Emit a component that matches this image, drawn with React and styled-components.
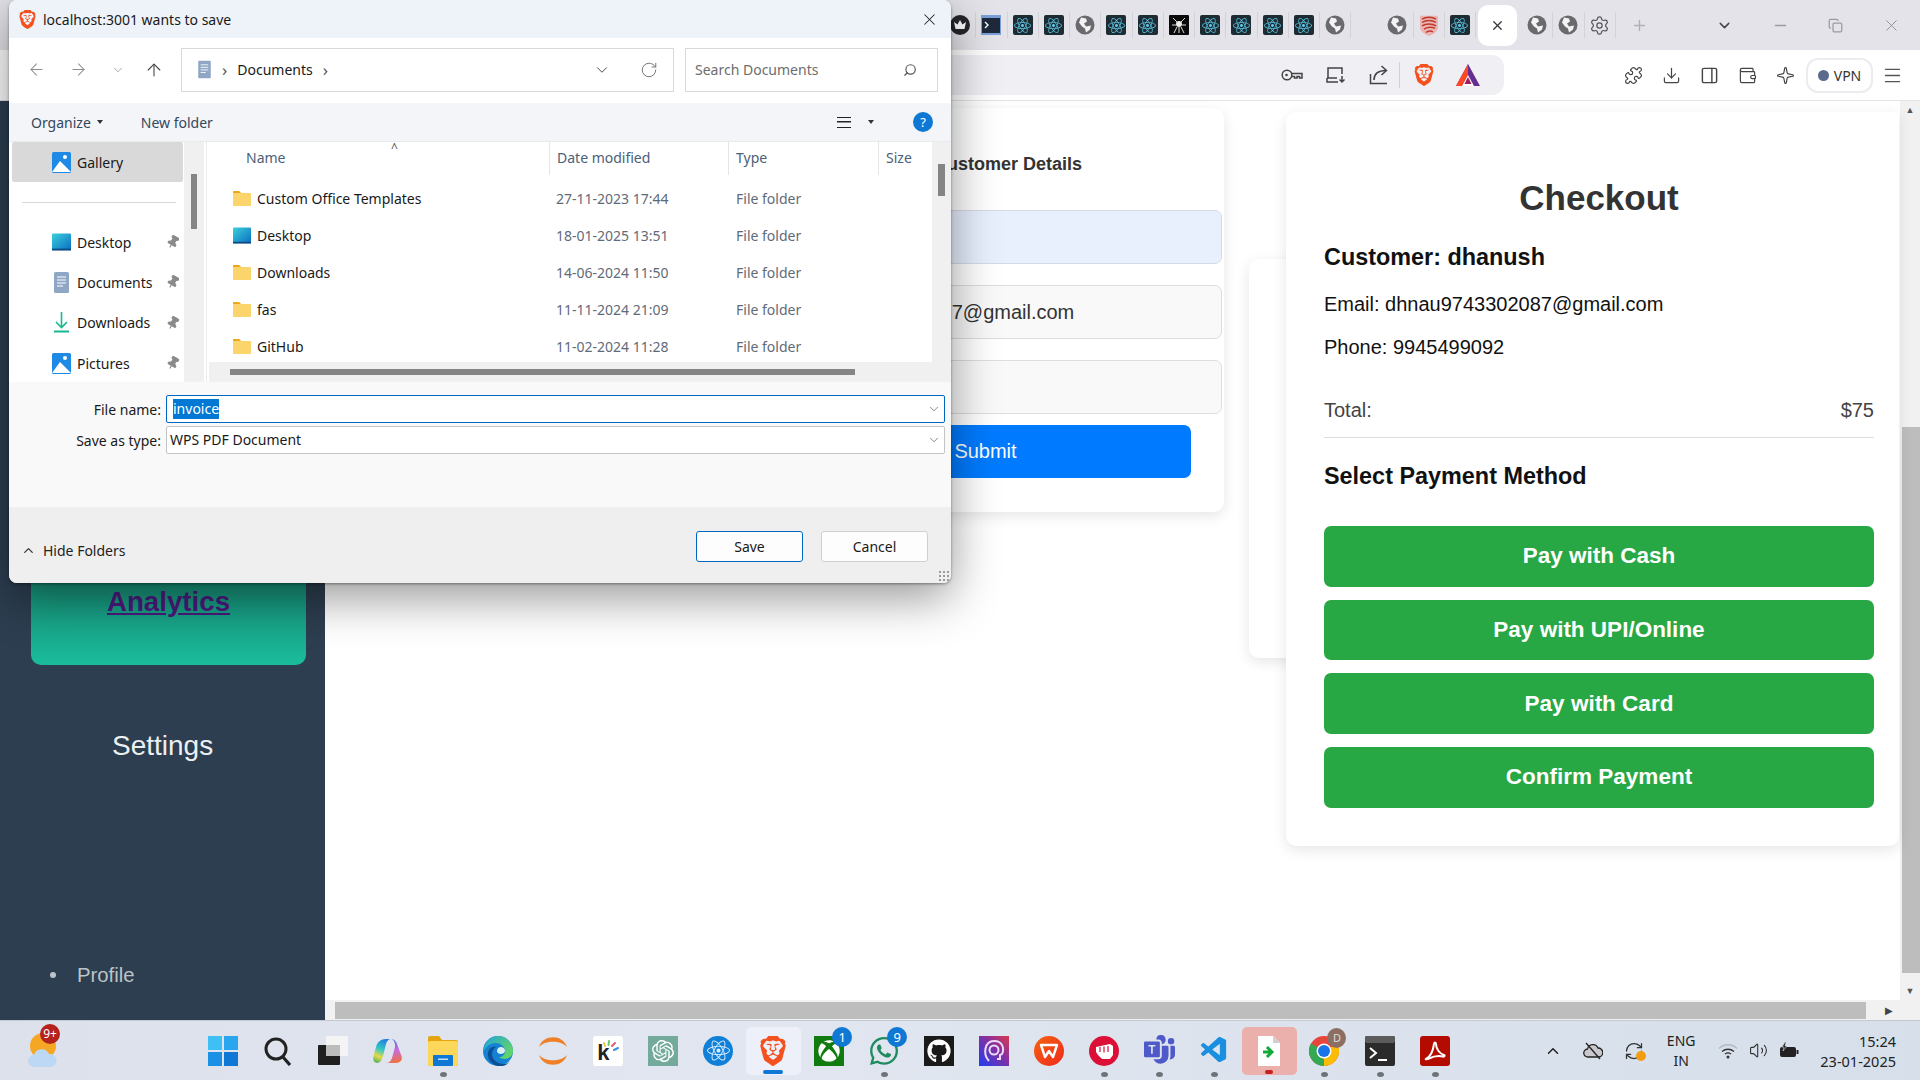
import styled, { createGlobalStyle } from 'styled-components';
import {
  ArrowLeft,
  ArrowRight,
  ArrowUp,
  ChevronDown,
  ChevronUp,
  Copy,
  Download,
  Menu,
  Minus,
  PanelRight,
  Pin,
  Plus,
  Puzzle,
  RotateCw,
  Search,
  Settings as Gear,
  Sparkle,
  Volume2,
  Wallet,
  X,
  RefreshCw,
} from 'lucide-react';
import { FaReact, FaGithub, FaXbox, FaWhatsapp } from 'react-icons/fa';
import { SiBrave, SiOpenai } from 'react-icons/si';
import { BsMicrosoftTeams } from 'react-icons/bs';
import { VscVscode } from 'react-icons/vsc';

const UI_FONT = `'Noto Sans', 'Open Sans', sans-serif`;
const PAGE_FONT = `'Liberation Sans', Arial, sans-serif`;

const GlobalStyle = createGlobalStyle`
  html, body {
    margin: 0;
    padding: 0;
    width: 1920px;
    height: 1080px;
    overflow: hidden;
    background: #fff;
  }
  * { box-sizing: border-box; }
`;

const BraveMark = ({ size = 22 }) => <SiBrave size={size} color="#f4511e" />;

const ReactTile = () => (
  <TabTile $bg="#1d2b33">
    <FaReact size={17} color="#5cc8e6" />
  </TabTile>
);

const GlobeIcon = () => (
  <svg width="20" height="20" viewBox="0 0 20 20">
    <circle cx="10" cy="10" r="9.5" fill="#6a6a6e" />
    <path d="M6 2.5l5 1 1 3-3 2 2 3 5-1-1 4-4 3-1-4-3-2-3-4z" fill="#f3f3f5" />
  </svg>
);

const CrownIcon = () => (
  <svg width="20" height="20" viewBox="0 0 20 20">
    <circle cx="10" cy="10" r="10" fill="#26262b" />
    <path d="M4 7l3.5 2.5L10 5l2.5 4.5L16 7l-1.5 7h-9z" fill="#fff" />
  </svg>
);

const TerminalTabIcon = () => (
  <svg width="20" height="20" viewBox="0 0 20 20">
    <rect width="20" height="20" fill="#7a9fd8" />
    <rect x="1" y="3" width="18" height="15" fill="#1e2a3c" />
    <path d="M4 7l3 3-3 3" stroke="#fff" strokeWidth="1.4" fill="none" />
  </svg>
);

const SpiderIcon = () => (
  <svg width="20" height="20" viewBox="0 0 20 20">
    <rect width="20" height="20" rx="1" fill="#0a0a0a" />
    <circle cx="10" cy="9" r="3" fill="#eee" />
    <path d="M4 3l4 4M16 3l-4 4M3 10h4M17 10h-4M5 18l3-6M15 18l-3-6M10 12v6" stroke="#ddd" strokeWidth="1" />
  </svg>
);

const FingerprintShield = () => (
  <svg width="20" height="22" viewBox="0 0 20 26" preserveAspectRatio="none">
    <path d="M1 2h18v14c0 5-5 8-9 10-4-2-9-5-9-10z" fill="#e9b6b3" />
    <path
      d="M3 6c4-3 10-3 14 0M3 10c4-3 10-3 14 0M3 14c4-3 10-3 14 0M5 18c3-3 8-3 11-1M7 22c2-2 5-2 7-1"
      stroke="#c0392b"
      strokeWidth="1.7"
      fill="none"
    />
  </svg>
);

const BatTriangle = () => (
  <svg width="24" height="22" viewBox="0 0 24 22">
    <path d="M12 0l12 22H0z" fill="#662d91" />
    <path d="M12 0L0 22h6l6-11z" fill="#ff4724" />
    <path d="M12 11l-6 11h12z" fill="#fff" />
    <path d="M12 13l-3.6 7h7.2z" fill="#9e1f63" />
  </svg>
);

const KeyIcon = () => (
  <svg width="22" height="14" viewBox="0 0 22 14" fill="none" stroke="#444" strokeWidth="1.5">
    <circle cx="6" cy="7" r="4.800" />
    <circle cx="5.500" cy="7" r="1.300" fill="#444" stroke="none" />
    <path d="M10.500 5.500H21V10h-2.500V8.500H16V10h-2.500V8.500h-3" />
  </svg>
);

const InstallIcon = () => (
  <svg width="20" height="18" viewBox="0 0 20 18" fill="none" stroke="#444" strokeWidth="1.5">
    <path d="M2 12V2h14v6" />
    <path d="M1 12v4h11M1 12h10" />
    <path d="M16 10v6M13.500 13.500l2.500 2.500 2.500-2.500" />
  </svg>
);

const ShareOutIcon = () => (
  <svg width="20" height="20" viewBox="0 0 20 20" fill="none" stroke="#444" strokeWidth="1.5">
    <path d="M1.500 9v9.500H18" />
    <path d="M5 15c0-6 4-9.500 12-9.500" />
    <path d="M12.500 1l5 4.500-5 4.500" />
  </svg>
);

const FolderIcon = () => (
  <svg width="18" height="15" viewBox="0 0 18 15">
    <path d="M0 1a1 1 0 0 1 1-1h5l2 2h9a1 1 0 0 1 1 1v11a1 1 0 0 1-1 1H1a1 1 0 0 1-1-1z" fill="#fbd56b" />
    <path d="M0 1a1 1 0 0 1 1-1h5l2 2H0z" fill="#e9a91b" />
  </svg>
);

const DesktopFolder = ({ w = 20, h = 20 }) => (
  <svg width={w} height={h} viewBox="0 0 20 20">
    <defs>
      <linearGradient id="deskg" x1="0" y1="0" x2="1" y2="1">
        <stop offset="0" stopColor="#3bd0dc" />
        <stop offset="1" stopColor="#0a6fc2" />
      </linearGradient>
    </defs>
    <rect y="1" width="20" height="17" rx="1" fill="url(#deskg)" />
    <rect y="17" width="20" height="2" fill="#0b4a86" />
  </svg>
);

const DocIcon = () => (
  <svg width="15" height="21" viewBox="0 0 15 21">
    <rect width="15" height="21" rx="1.5" fill="#8fa7c4" />
    <path d="M3 5h9M3 8h9M3 11h9M3 14h6" stroke="#fff" strokeWidth="1" />
  </svg>
);

const GalleryIcon = () => (
  <svg width="19" height="21" viewBox="0 0 19 21">
    <rect width="19" height="21" rx="1.5" fill="#1f8ae6" />
    <circle cx="13" cy="5" r="2" fill="#fff" />
    <path d="M0 20l8-11 11 11z" fill="#fff" />
  </svg>
);

const DownloadArrow = () => (
  <svg width="15" height="21" viewBox="0 0 15 21">
    <path d="M7.5 0v15M2 10l5.500 5.500L13 10" stroke="#17b890" strokeWidth="1.6" fill="none" />
    <path d="M0 19.500h15" stroke="#17b890" strokeWidth="2" />
  </svg>
);

const tabIcons = {
  react: ReactTile,
  globe: GlobeIcon,
  crown: CrownIcon,
  term: TerminalTabIcon,
  spider: SpiderIcon,
  print: FingerprintShield,
  gear: () => <Gear size={21} color="#55555c" strokeWidth={1.4} />,
};

const leftTabs = ['crown', 'term', 'react', 'react', 'globe', 'react', 'react', 'spider', 'react', 'react', 'react', 'react', 'globe'];
const midTabs = ['globe', 'print', 'react'];
const rightTabs = ['globe', 'globe', 'gear'];

const renderTabs = list =>
  list.map((name, i) => {
    const Icon = tabIcons[name];
    return (
      <Tab key={i}>
        <Icon />
      </Tab>
    );
  });

const files = [
  { name: 'Custom Office Templates', date: '27-11-2023 17:44' },
  { name: 'Desktop', date: '18-01-2025 13:51', desk: true },
  { name: 'Downloads', date: '14-06-2024 11:50' },
  { name: 'fas', date: '11-11-2024 21:09' },
  { name: 'GitHub', date: '11-02-2024 11:28' },
];

const navPlaces = [
  { name: 'Desktop', icon: <DesktopFolder /> },
  { name: 'Documents', icon: <DocIcon /> },
  { name: 'Downloads', icon: <DownloadArrow /> },
  { name: 'Pictures', icon: <GalleryIcon /> },
];

const payments = ['Pay with Cash', 'Pay with UPI/Online', 'Pay with Card', 'Confirm Payment'];

const getTaskIcons = () => [
  { key: 'win', icon: (
    <svg width="30" height="30" viewBox="0 0 30 30">
      <rect width="14" height="14" fill="#3fc0f5" />
      <rect x="16" width="14" height="14" fill="#2aa6ee" />
      <rect y="16" width="14" height="14" fill="#1b91e6" />
      <rect x="16" y="16" width="14" height="14" fill="#0f78d4" />
    </svg>
  ) },
  { key: 'search', icon: (
    <svg width="30" height="30" viewBox="0 0 30 30">
      <circle cx="13" cy="13" r="10" fill="none" stroke="#222" strokeWidth="3" />
      <path d="M20 21l7 8" stroke="#222" strokeWidth="3.2" />
    </svg>
  ) },
  { key: 'view', icon: (
    <svg width="30" height="30" viewBox="0 0 30 30">
      <rect x="0" y="9" width="22" height="20" rx="1" fill="#1f1f1f" />
      <rect x="8" y="0" width="22" height="20" rx="1" fill="#f4f4f4" />
      <rect x="8" y="9" width="14" height="11" fill="#bcbcbc" />
    </svg>
  ) },
  { key: 'copilot', icon: (
    <svg width="30" height="26" viewBox="0 0 30 26">
      <defs>
        <linearGradient id="copa" x1="0.6" y1="0" x2="0.3" y2="1">
          <stop offset="0" stopColor="#1f7ee0" />
          <stop offset=".45" stopColor="#35c9c0" />
          <stop offset=".75" stopColor="#e8d84a" />
          <stop offset="1" stopColor="#58b85a" />
        </linearGradient>
        <linearGradient id="copb" x1="0.4" y1="0" x2="0.6" y2="1">
          <stop offset="0" stopColor="#3b6fe8" />
          <stop offset=".5" stopColor="#c86be0" />
          <stop offset="1" stopColor="#f2703c" />
        </linearGradient>
      </defs>
      <path d="M13 1h5c-3 0-4 2-5 5l-3 12c-.8 4-3 7-6 7-3 0-4.500-3-3.500-7l2.500-9c1-5 5-8 10-8z" fill="url(#copa)" />
      <path d="M18 1c3 0 5 2 6 5l4.500 12c1.500 4-1.500 7-5.500 7h-10c3 0 5-2 6-5l3-11c.7-3-1-8-4-8z" fill="url(#copb)" />
    </svg>
  ) },
  { key: 'files', icon: (
    <svg width="30" height="30" viewBox="0 0 30 30">
      <path d="M0 2a2 2 0 0 1 2-2h9l3 4h14a2 2 0 0 1 2 2v22a2 2 0 0 1-2 2H2a2 2 0 0 1-2-2z" fill="#e5a50f" />
      <rect y="5" width="30" height="25" rx="2" fill="#fcd759" />
      <rect x="5" y="19" width="20" height="11" rx="1" fill="#0f78d4" />
      <rect x="10" y="22.500" width="10" height="1.500" fill="#bfe0f7" />
    </svg>
  ), dot: true },
  { key: 'edge', icon: (
    <svg width="30" height="30" viewBox="0 0 30 30">
      <defs>
        <linearGradient id="edgea" x1="0" y1="0" x2="1" y2="0.6">
          <stop offset="0" stopColor="#1fa5dc" />
          <stop offset="1" stopColor="#62d36a" />
        </linearGradient>
      </defs>
      <circle cx="15" cy="15" r="15" fill="#1481d2" />
      <path d="M15 0a15 15 0 0 1 15 15c0 5-4 8-8 8-3 0-5-1-6-2 3 0 6-2 6-6 0-5-5-8-9-8-6 0-11 4-13 10C1 7 7 0 15 0z" fill="url(#edgea)" />
      <path d="M9 18c0 6 6 10 12 10 2 0 4-.5 6-3-3 5-8 5.500-12 5C9 29 4 23 5 17c.6-4 4-7 8-6-2 1-4 4-4 7z" fill="#0c4f96" />
      <path d="M14 15c0-2 1.500-4 4-4 2.500 0 4 2 4 4 0 2-2.500 3-4 3-2 0-4-1-4-3z" fill="#d8ecf2" />
    </svg>
  ) },
  { key: 'arc', icon: (
    <svg width="30" height="30" viewBox="0 0 30 30">
      <path d="M1 11C5-2 25-2 29 11 23 4 7 4 1 11z" fill="#f08028" />
      <path d="M1 19c4 13 24 13 28 0-6 7-22 7-28 0z" fill="#f08028" />
    </svg>
  ) },
  { key: 'kite', icon: (
    <KiteTile>
      <KiteLetter>k</KiteLetter>
      <KiteTicks width="30" height="30" viewBox="0 0 30 30" strokeWidth="2" strokeLinecap="round">
        <path d="M11 7l1 3" stroke="#f2c230" />
        <path d="M16 5l-.5 4" stroke="#6ac46a" />
        <path d="M22 7l-3 3" stroke="#e0567a" />
        <path d="M25 12l-4 2" stroke="#3f8fe0" />
      </KiteTicks>
    </KiteTile>
  ) },
  { key: 'gpt', icon: (
    <GptTile>
      <SiOpenai size={22} color="#fff" />
    </GptTile>
  ) },
  { key: 'atom', icon: (
    <AtomCircle>
      <FaReact size={23} color="#d6ecff" />
    </AtomCircle>
  ) },
  { key: 'brave', icon: <BraveMark size={30} />, active: 'blue' },
  { key: 'xbox', icon: (
    <XboxTile>
      <FaXbox size={22} color="#fff" />
    </XboxTile>
  ), badge: '1' },
  { key: 'wa', icon: <FaWhatsapp size={32} color="#1f8b5f" />, badge: '9', dot: true },
  { key: 'gh', icon: (
    <GithubTile>
      <FaGithub size={24} color="#fff" />
    </GithubTile>
  ) },
  { key: 'wr', icon: (
    <WarpTile>
      <svg width="22" height="24" viewBox="0 0 22 24" fill="none" stroke="#eadcf8" strokeWidth="2">
        <path d="M6 22c-6-6-5-20 5-20s10 9 8 13l-2 1v4h-3" />
        <circle cx="11" cy="11" r="4.500" />
      </svg>
    </WarpTile>
  ) },
  { key: 'wps', icon: (
    <svg width="30" height="30" viewBox="0 0 30 30">
      <defs>
        <linearGradient id="wpsg" x1="0" y1="0" x2="1" y2="1">
          <stop offset="0" stopColor="#f5620f" />
          <stop offset="1" stopColor="#ee2a1e" />
        </linearGradient>
      </defs>
      <circle cx="15" cy="15" r="15" fill="url(#wpsg)" />
      <path d="M7 9h16l-4 12-4-6-4 6z" fill="none" stroke="#fff" strokeWidth="2.400" strokeLinejoin="round" />
    </svg>
  ) },
  { key: 'red', icon: (
    <svg width="30" height="30" viewBox="0 0 30 30">
      <circle cx="15" cy="15" r="15" fill="#dc0f36" />
      <path d="M7 11l14-3 3 2v9l-3 4h-8l-4-4-2-3z" fill="#fff" />
      <path d="M11 11v5M15 10.500v6M19 10v6" stroke="#dc0f36" strokeWidth="1.200" />
    </svg>
  ), dot: true },
  { key: 'teams', icon: <BsMicrosoftTeams size={31} color="#5059c9" />, dot: true },
  { key: 'code', icon: <VscVscode size={31} color="#1a8fe0" />, dot: true },
  { key: 'file', icon: (
    <svg width="22" height="30" viewBox="0 0 22 30">
      <path d="M0 0h15l7 7v23H0z" fill="#fff" />
      <path d="M15 0l7 7h-7z" fill="#cfcfcf" />
      <path d="M5 16h8M9 11l5 5-5 5" stroke="#12a83a" strokeWidth="3" fill="none" />
    </svg>
  ), active: 'red' },
  { key: 'chrome', icon: (
    <ChromeWrap>
      <svg width="30" height="30" viewBox="0 0 30 30">
        <circle cx="15" cy="15" r="15" fill="#e8453c" />
        <path d="M15 15L2 7.500A15 15 0 0 0 15 30z" fill="#34a853" />
        <path d="M15 15v15A15 15 0 0 0 28 7.500z" fill="#fbbc05" />
        <circle cx="15" cy="15" r="7.500" fill="#fff" />
        <circle cx="15" cy="15" r="6" fill="#1a73e8" />
      </svg>
      <ChromeBadge>D</ChromeBadge>
    </ChromeWrap>
  ), dot: true },
  { key: 'term', icon: (
    <svg width="30" height="30" viewBox="0 0 30 30">
      <rect width="30" height="30" rx="2" fill="#2b2b2b" />
      <rect width="30" height="7" rx="2" fill="#5c5c5c" />
      <path d="M5 12l6 5-6 5" stroke="#fff" strokeWidth="2" fill="none" />
      <path d="M13 24h9" stroke="#fff" strokeWidth="2" />
    </svg>
  ), dot: true },
  { key: 'pdf', icon: (
    <PdfTile>
      <svg width="22" height="22" viewBox="0 0 22 22">
        <path
          d="M2 19c4-2 7-8 8-15 .3-2 2-2 2 0 0 5 4 10 8 11 1 .5 .5 2-1 1.500-5-1-10 0-14 2-2 1-4 1-3 .5z"
          fill="none"
          stroke="#fff"
          strokeWidth="2"
        />
      </svg>
    </PdfTile>
  ), dot: true },
];

const App = () => {
  return (
    <>
      <GlobalStyle />
      <Screen>
        <TabStrip>
          {renderTabs(leftTabs)}
          <TabGap />
          {renderTabs(midTabs)}
          <ActiveTab>
            <X size={15} color="#333" />
          </ActiveTab>
          {renderTabs(rightTabs)}
          <NewTab>
            <Plus size={17} color="#b0b0b6" />
          </NewTab>
          <WindowControls>
            <ChevronDown size={17} color="#444" />
            <Minus size={17} color="#9a9aa0" />
            <Copy size={15} color="#9a9aa0" />
            <X size={19} color="#8d8d92" strokeWidth={1.2} />
          </WindowControls>
        </TabStrip>

        <Toolbar>
          <AddressBar>
            <AddressActions>
              <KeyIcon />
              <InstallIcon />
              <ShareOutIcon />
            </AddressActions>
            <BarDivider />
            <BraveMark size={22} />
            <BatSlot>
              <BatTriangle />
            </BatSlot>
          </AddressBar>
          <ToolIcons>
            <Puzzle size={19} color="#444" strokeWidth={1.5} />
            <Download size={19} color="#444" strokeWidth={1.5} />
            <PanelRight size={19} color="#444" strokeWidth={1.8} />
            <Wallet size={19} color="#444" strokeWidth={1.5} />
            <Sparkle size={19} color="#444" strokeWidth={1.5} />
          </ToolIcons>
          <VpnPill>
            <VpnDot />
            VPN
          </VpnPill>
          <MenuButton>
            <Menu size={21} color="#555" strokeWidth={1.6} />
          </MenuButton>
        </Toolbar>

        <PageBody>
          <Sidebar>
            <AnalyticsCard>
              <AnalyticsLink href="#analytics">Analytics</AnalyticsLink>
            </AnalyticsCard>
            <SettingsLabel>Settings</SettingsLabel>
            <ProfileList>
              <ProfileItem>Profile</ProfileItem>
            </ProfileList>
          </Sidebar>

          <MainColumn>
            <ViewportRow>
              <Content>
                <DetailsCard>
                  <DetailsTitle>Customer Details</DetailsTitle>
                  <DetailsInput $filled readOnly value="dhanush" />
                  <DetailsInput readOnly value="dhnau9743302087@gmail.com" />
                  <DetailsInput readOnly value="9945499092" />
                  <SubmitButton>Submit</SubmitButton>
                </DetailsCard>
                <BackCard />
                <CheckoutCard>
                  <CheckoutTitle>Checkout</CheckoutTitle>
                  <CustomerName>Customer: dhanush</CustomerName>
                  <InfoLine>Email: dhnau9743302087@gmail.com</InfoLine>
                  <InfoLine>Phone: 9945499092</InfoLine>
                  <TotalRow>
                    <span>Total:</span>
                    <span>$75</span>
                  </TotalRow>
                  <MethodTitle>Select Payment Method</MethodTitle>
                  <PayList>
                    {payments.map(label => (
                      <PayButton key={label}>{label}</PayButton>
                    ))}
                  </PayList>
                </CheckoutCard>
              </Content>
              <VScroll>
                <ScrollArrow>▲</ScrollArrow>
                <VThumbArea>
                  <VThumb />
                </VThumbArea>
                <ScrollArrow>▼</ScrollArrow>
              </VScroll>
            </ViewportRow>
            <HScroll>
              <HThumb />
              <HArrow>▶</HArrow>
            </HScroll>
          </MainColumn>
        </PageBody>

        <Taskbar>
          <WeatherCell>
            <svg width="30" height="36" viewBox="0 0 30 36">
              <circle cx="15" cy="13" r="13" fill="#f5a623" />
              <path d="M6 34a6 6 0 0 1 0-12 8 8 0 0 1 15-1 6.500 6.500 0 0 1 2 13z" fill="#bcd8f5" />
            </svg>
            <WeatherBadge>9+</WeatherBadge>
          </WeatherCell>
          <TaskIcons>
            {getTaskIcons().map(item => (
              <TaskCell key={item.key} $active={item.active}>
                {item.icon}
                {item.badge && <CountBadge>{item.badge}</CountBadge>}
                {item.dot && <RunDot />}
                {item.active && <ActiveBar $active={item.active} />}
              </TaskCell>
            ))}
          </TaskIcons>
          <Tray>
            <ChevronUp size={18} color="#222" />
            <svg width="20" height="18" viewBox="0 0 20 18">
              <path d="M5 15a4 4 0 0 1-.5-8 5.500 5.500 0 0 1 10.500-1 4.500 4.500 0 0 1 .5 9z" fill="#c9c9cd" stroke="#222" strokeWidth="1.300" />
              <path d="M3 1l14 16" stroke="#222" strokeWidth="1.300" />
            </svg>
            <SyncWrap>
              <RefreshCw size={20} color="#333" strokeWidth={1.5} />
              <SyncDot />
            </SyncWrap>
            <LangBlock>
              <span>ENG</span>
              <span>IN</span>
            </LangBlock>
            <TrayStatus>
              <svg width="20" height="16" viewBox="0 0 20 16" fill="none">
                <path d="M1 5.500c5-5 13-5 18 0" stroke="#b4b8c0" strokeWidth="1.300" />
                <path d="M4 8.500c3.500-3 8.500-3 12 0" stroke="#333" strokeWidth="1.300" />
                <path d="M7 11c2-1.500 4-1.500 6 0" stroke="#333" strokeWidth="1.300" />
                <circle cx="10" cy="14" r="1.500" fill="#333" />
              </svg>
              <Volume2 size={19} color="#333" strokeWidth={1.4} />
              <svg width="20" height="17" viewBox="0 0 20 17">
                <rect x="1" y="5" width="16" height="10" rx="2" fill="#222" />
                <rect x="17.500" y="8" width="2" height="4" fill="#222" />
                <path d="M6 0L3 5h2l-1 4 4-5H6l1-4z" fill="#222" stroke="#d9e0ea" strokeWidth=".6" />
              </svg>
            </TrayStatus>
            <ClockBlock>
              <span>15:24</span>
              <span>23-01-2025</span>
            </ClockBlock>
          </Tray>
        </Taskbar>

        <Dialog>
          <DialogTitleBar>
            <BraveMark size={19} />
            <DialogTitle>localhost:3001 wants to save</DialogTitle>
            <DialogClose>
              <X size={19} color="#222" strokeWidth={1.3} />
            </DialogClose>
          </DialogTitleBar>

          <NavBar>
            <NavArrows>
              <ArrowLeft size={19} color="#8d8d8d" strokeWidth={1.3} />
              <ArrowRight size={19} color="#8d8d8d" strokeWidth={1.3} />
              <ChevronDown size={14} color="#8d8d8d" strokeWidth={1.3} />
              <ArrowUp size={20} color="#444" strokeWidth={1.3} />
            </NavArrows>
            <PathBox>
              <DocIconSmall>
                <DocIcon />
              </DocIconSmall>
              <PathChevron>›</PathChevron>
              <PathText>Documents</PathText>
              <PathChevron>›</PathChevron>
              <PathTools>
                <ChevronDown size={18} color="#444" strokeWidth={1.3} />
                <RotateCw size={18} color="#666" strokeWidth={1.2} />
              </PathTools>
            </PathBox>
            <SearchBox>
              <span>Search Documents</span>
              <MirrorIcon>
                <Search size={14} color="#555" />
              </MirrorIcon>
            </SearchBox>
          </NavBar>

          <CommandBar>
            <Command>
              Organize <Caret />
            </Command>
            <Command>New folder</Command>
            <CommandRight>
              <ListLines />
              <Caret />
              <HelpCircle>?</HelpCircle>
            </CommandRight>
          </CommandBar>

          <Panes>
            <NavPane>
              <NavGallery>
                <GalleryIcon />
                Gallery
              </NavGallery>
              <NavDivider />
              {navPlaces.map(place => (
                <NavPlace key={place.name}>
                  <NavIconSlot>{place.icon}</NavIconSlot>
                  {place.name}
                  <PinSlot>
                    <Pin size={14} color="#8a8a8a" fill="#8a8a8a" />
                  </PinSlot>
                </NavPlace>
              ))}
            </NavPane>
            <PaneScroll>
              <PaneThumb />
            </PaneScroll>
            <FileColumn>
              <FileHeader>
                <HeaderName>
                  Name
                  <SortCaret>^</SortCaret>
                </HeaderName>
                <HeaderCell>Date modified</HeaderCell>
                <HeaderCell>Type</HeaderCell>
                <HeaderCell>Size</HeaderCell>
              </FileHeader>
              <FileRows>
                {files.map(file => (
                  <FileRow key={file.name}>
                    <FileName>
                      <FileIconSlot>{file.desk ? <DesktopFolder w={20} h={19} /> : <FolderIcon />}</FileIconSlot>
                      {file.name}
                    </FileName>
                    <FileMeta>{file.date}</FileMeta>
                    <FileMeta $type>File folder</FileMeta>
                  </FileRow>
                ))}
              </FileRows>
              <FileHScroll>
                <FileHThumb />
              </FileHScroll>
            </FileColumn>
            <FileVScroll>
              <FileVThumb />
            </FileVScroll>
          </Panes>

          <SaveForm>
            <FormRow>
              <FormLabel>File name:</FormLabel>
              <FormField $focus>
                <Selected>invoice</Selected>
                <FieldChevron>
                  <ChevronDown size={14} color="#555" strokeWidth={1.2} />
                </FieldChevron>
              </FormField>
            </FormRow>
            <FormRow>
              <FormLabel>Save as type:</FormLabel>
              <FormField>
                WPS PDF Document
                <FieldChevron>
                  <ChevronDown size={14} color="#555" strokeWidth={1.2} />
                </FieldChevron>
              </FormField>
            </FormRow>
          </SaveForm>

          <DialogFooter>
            <HideFolders>
              <ChevronUp size={15} color="#333" strokeWidth={2} />
              Hide Folders
            </HideFolders>
            <FooterButton $primary>Save</FooterButton>
            <FooterButton>Cancel</FooterButton>
            <ResizeGrip />
          </DialogFooter>
        </Dialog>
      </Screen>
    </>
  );
};

const Screen = styled.div`
  position: relative;
  width: 1920px;
  height: 1080px;
  display: flex;
  flex-direction: column;
  overflow: hidden;
  font-family: ${PAGE_FONT};
`;

const TabStrip = styled.div`
  height: 50px;
  flex: none;
  background: #e3e3e9;
  display: flex;
  align-items: center;
  padding-left: 945px;
`;

const Tab = styled.div`
  width: 31.25px;
  height: 26px;
  flex: none;
  display: flex;
  align-items: center;
  justify-content: center;
  border-right: 1px solid #d2d2d8;
`;

const TabTile = styled.div`
  width: 20px;
  height: 20px;
  border-radius: 2px;
  background: ${({ $bg }) => $bg};
  display: flex;
  align-items: center;
  justify-content: center;
`;

const TabGap = styled.div`
  width: 31px;
  flex: none;
`;

const ActiveTab = styled.div`
  width: 39px;
  height: 41px;
  margin: 0 5px 0 2px;
  flex: none;
  background: #fff;
  border-radius: 10px;
  display: flex;
  align-items: center;
  justify-content: center;
`;

const NewTab = styled.div`
  width: 40px;
  margin-left: 4px;
  display: flex;
  justify-content: center;
`;

const WindowControls = styled.div`
  margin-left: 56px;
  width: 185px;
  display: flex;
  align-items: center;
  justify-content: space-between;
`;

const Toolbar = styled.div`
  height: 51px;
  flex: none;
  background: #fff;
  border-bottom: 1px solid #e3e3e9;
  display: flex;
  align-items: center;
  padding-left: 900px;
`;

const AddressBar = styled.div`
  width: 604px;
  height: 40px;
  border-radius: 12px;
  background: #efeff4;
  display: flex;
  align-items: center;
  justify-content: flex-end;
  padding-right: 24px;
`;

const AddressActions = styled.div`
  display: flex;
  align-items: center;
  gap: 23px;
  margin-right: 10px;
`;

const BarDivider = styled.div`
  width: 1px;
  height: 26px;
  background: #cfcfd6;
  margin-right: 13px;
`;

const BatSlot = styled.span`
  display: flex;
  margin-left: 21px;
`;

const ToolIcons = styled.div`
  margin-left: 120px;
  display: flex;
  align-items: center;
  gap: 19px;
`;

const VpnPill = styled.div`
  margin-left: 11px;
  width: 67px;
  height: 35px;
  border: 2px solid #ececf0;
  border-radius: 12px;
  display: flex;
  align-items: center;
  justify-content: center;
  gap: 5px;
  font-family: ${UI_FONT};
  font-size: 14px;
  color: #333;
`;

const VpnDot = styled.span`
  width: 11px;
  height: 11px;
  border-radius: 50%;
  background: #5a6b8c;
`;

const MenuButton = styled.div`
  margin-left: 9px;
  display: flex;
`;

const PageBody = styled.div`
  flex: 1;
  min-height: 0;
  display: flex;
`;

const Sidebar = styled.aside`
  width: 325px;
  flex: none;
  background: #2c3e50;
  display: flex;
  flex-direction: column;
  padding-top: 380px;
`;

const AnalyticsCard = styled.div`
  width: 275px;
  height: 184px;
  margin-left: 31px;
  background: linear-gradient(#168a72 50%, #1abc9c);
  border-radius: 0 0 10px 10px;
  display: flex;
  justify-content: center;
  padding-top: 104px;
`;

const AnalyticsLink = styled.a`
  font-size: 27.7px;
  font-weight: 700;
  line-height: 33px;
  height: 33px;
  color: #4b1a7d;
`;

const SettingsLabel = styled.div`
  margin: 64px 0 0 112px;
  font-size: 28px;
  line-height: 34px;
  color: #ecf0f1;
`;

const ProfileList = styled.ul`
  margin: 199px 0 0;
  padding-left: 77px;
  list-style: none;
`;

const ProfileItem = styled.li`
  position: relative;
  font-size: 20.3px;
  line-height: 26px;
  color: #bdc3c7;
  &::before {
    content: '';
    position: absolute;
    left: -27px;
    top: 10px;
    width: 6px;
    height: 6px;
    border-radius: 50%;
    background: #bdc3c7;
  }
`;

const MainColumn = styled.div`
  flex: 1;
  min-width: 0;
  display: flex;
  flex-direction: column;
  background: #fff;
`;

const ViewportRow = styled.div`
  flex: 1;
  min-height: 0;
  display: flex;
`;

const Content = styled.div`
  position: relative;
  flex: 1;
  min-width: 0;
  display: flex;
  justify-content: flex-end;
  align-items: flex-start;
  background: #fff;
  padding-right: 1px;
`;

const Card = styled.div`
  background: #fff;
  border-radius: 10px;
  box-shadow: 0 4px 14px rgba(0, 0, 0, 0.1);
`;

const DetailsCard = styled(Card)`
  width: 464px;
  height: 404px;
  margin: 7px 62px 0 0;
  padding: 0 0 0 20px;
  display: flex;
  flex-direction: column;
  align-items: flex-start;
`;

const DetailsTitle = styled.h3`
  margin: 45px 0 0 154px;
  font-size: 18px;
  line-height: 22px;
  font-weight: 700;
  color: #333;
`;

const DetailsInput = styled.input`
  width: 442px;
  height: 54px;
  margin-top: 21px;
  padding: 0 15px;
  border: 1px solid ${({ $filled }) => ($filled ? '#d5dbe6' : '#ddd')};
  border-radius: 7px;
  background: ${({ $filled }) => ($filled ? '#e8f0fe' : '#f9f9f9')};
  font-family: ${PAGE_FONT};
  font-size: 20px;
  color: #333;
  outline: none;
  &:first-of-type {
    margin-top: 35px;
  }
`;

const SubmitButton = styled.button`
  width: 411px;
  height: 53px;
  margin-top: 11px;
  border: none;
  border-radius: 7px;
  background: #007bff;
  color: #fff;
  font-family: ${PAGE_FONT};
  font-size: 20px;
`;

const BackCard = styled(Card)`
  position: absolute;
  left: 924px;
  top: 158px;
  width: 60px;
  height: 399px;
`;

const CheckoutCard = styled(Card)`
  position: relative;
  width: 613px;
  height: 734px;
  margin-top: 11px;
  padding: 0 25px 0 38px;
  display: flex;
  flex-direction: column;
  border-radius: 10px 0 10px 10px;
`;

const CheckoutTitle = styled.h2`
  margin: 65px 0 0;
  font-size: 35px;
  line-height: 42px;
  font-weight: 700;
  text-align: center;
  color: #333;
`;

const CustomerName = styled.h3`
  margin: 24px 0 0;
  font-size: 23.4px;
  line-height: 28px;
  font-weight: 700;
  color: #111;
`;

const InfoLine = styled.p`
  margin: 22px 0 0;
  font-size: 20px;
  line-height: 23px;
  color: #111;
  & + & {
    margin-top: 20px;
  }
`;

const TotalRow = styled.div`
  margin-top: 40px;
  padding-bottom: 15px;
  height: 39px;
  display: flex;
  justify-content: space-between;
  border-bottom: 1px solid #ddd;
  font-size: 20px;
  line-height: 23px;
  color: #444;
`;

const MethodTitle = styled.h3`
  margin: 24px 0 0;
  font-size: 23.4px;
  line-height: 28px;
  font-weight: 700;
  color: #111;
`;

const PayList = styled.div`
  margin-top: 36px;
  display: flex;
  flex-direction: column;
  gap: 13px;
`;

const PayButton = styled.button`
  height: 60.7px;
  border: none;
  border-radius: 7px;
  background: #28a745;
  color: #fff;
  font-family: ${PAGE_FONT};
  font-size: 22.5px;
  font-weight: 700;
`;

const VScroll = styled.div`
  width: 20px;
  flex: none;
  background: #f1f1f1;
  display: flex;
  flex-direction: column;
`;

const ScrollArrow = styled.div`
  height: 18px;
  flex: none;
  text-align: center;
  font-size: 9px;
  line-height: 18px;
  color: #555;
`;

const VThumbArea = styled.div`
  flex: 1;
  min-height: 0;
  padding: 308px 0 9px 2px;
  display: flex;
`;

const VThumb = styled.div`
  flex: 1;
  background: #bdbdbd;
`;

const HScroll = styled.div`
  height: 20px;
  flex: none;
  background: #f1f1f1;
  display: flex;
  align-items: center;
  padding-left: 10px;
`;

const HThumb = styled.div`
  width: 1531px;
  height: 17px;
  background: #bdbdbd;
`;

const HArrow = styled.div`
  margin-left: 19px;
  font-size: 10px;
  color: #444;
`;

const Taskbar = styled.footer`
  height: 60px;
  flex: none;
  border-top: 1px solid #c3c8d3;
  background: linear-gradient(90deg, #dde1ec, #e1e6f0 40%, #d6dfea);
  display: flex;
  align-items: center;
`;

const WeatherCell = styled.div`
  position: relative;
  width: 195px;
  flex: none;
  padding-left: 28px;
  display: flex;
`;

const WeatherBadge = styled.span`
  position: absolute;
  left: 40px;
  top: -9px;
  width: 20px;
  height: 20px;
  border-radius: 50%;
  background: #b5211d;
  color: #fff;
  font-family: ${UI_FONT};
  font-size: 12px;
  line-height: 20px;
  text-align: center;
`;

const TaskIcons = styled.div`
  display: flex;
  align-items: center;
`;

const TaskCell = styled.div`
  position: relative;
  width: 55.1px;
  height: 48px;
  flex: none;
  display: flex;
  align-items: center;
  justify-content: center;
  border-radius: 5px;
  background: ${({ $active }) =>
    $active === 'blue' ? '#edf0f8' : $active === 'red' ? '#ebb0ac' : 'transparent'};
`;

const CountBadge = styled.span`
  position: absolute;
  right: 4px;
  top: 0;
  width: 20px;
  height: 20px;
  border-radius: 50%;
  background: #0f78d4;
  color: #fff;
  font-family: ${UI_FONT};
  font-size: 13px;
  line-height: 20px;
  text-align: center;
`;

const RunDot = styled.span`
  position: absolute;
  bottom: -2px;
  left: 50%;
  width: 7px;
  height: 5px;
  margin-left: -3px;
  border-radius: 50%;
  background: #6f7378;
`;

const ActiveBar = styled.span`
  position: absolute;
  bottom: 1px;
  left: 50%;
  height: 4px;
  width: ${({ $active }) => ($active === 'blue' ? '20px' : '8px')};
  margin-left: ${({ $active }) => ($active === 'blue' ? '-10px' : '-4px')};
  border-radius: 2px;
  background: ${({ $active }) => ($active === 'blue' ? '#0f78d4' : '#c8201c')};
`;

const KiteTile = styled.div`
  position: relative;
  width: 30px;
  height: 30px;
  background: #fff;
  border-radius: 3px;
`;

const KiteLetter = styled.span`
  position: absolute;
  left: 4px;
  bottom: 2px;
  font-family: ${PAGE_FONT};
  font-size: 22px;
  line-height: 22px;
  font-weight: 700;
  color: #222;
`;

const KiteTicks = styled.svg`
  position: absolute;
  left: 0;
  top: 0;
`;

const GptTile = styled.div`
  width: 30px;
  height: 30px;
  background: #74aa9c;
  display: flex;
  align-items: center;
  justify-content: center;
`;

const AtomCircle = styled.div`
  width: 30px;
  height: 30px;
  border-radius: 50%;
  background: #0f7fd8;
  display: flex;
  align-items: center;
  justify-content: center;
`;

const XboxTile = styled.div`
  width: 30px;
  height: 30px;
  background: #107c10;
  display: flex;
  align-items: center;
  justify-content: center;
`;

const GithubTile = styled.div`
  width: 30px;
  height: 30px;
  background: #1a1a1a;
  display: flex;
  align-items: center;
  justify-content: center;
`;

const WarpTile = styled.div`
  width: 30px;
  height: 30px;
  background: linear-gradient(45deg, #1c3ff0, #8a2f9e 60%, #d93a4a);
  display: flex;
  align-items: center;
  justify-content: center;
`;

const ChromeWrap = styled.div`
  position: relative;
  display: flex;
`;

const ChromeBadge = styled.span`
  position: absolute;
  right: -7px;
  top: -8px;
  width: 19px;
  height: 20px;
  border-radius: 50%;
  background: #8d6e63;
  color: #ddd;
  font-family: ${UI_FONT};
  font-size: 11px;
  line-height: 20px;
  text-align: center;
`;

const PdfTile = styled.div`
  width: 30px;
  height: 30px;
  border-radius: 3px;
  background: #b30b00;
  display: flex;
  align-items: center;
  justify-content: center;
`;

const Tray = styled.div`
  flex: 1;
  display: flex;
  align-items: center;
  padding-left: 82px;
  gap: 21px;
  font-family: ${UI_FONT};
  color: #222;
`;

const TrayStatus = styled.div`
  display: flex;
  align-items: center;
  gap: 11px;
`;

const SyncWrap = styled.div`
  position: relative;
  display: flex;
`;

const SyncDot = styled.span`
  position: absolute;
  right: -2px;
  bottom: 0;
  width: 10px;
  height: 10px;
  border-radius: 50%;
  background: #f39c12;
`;

const LangBlock = styled.div`
  display: flex;
  flex-direction: column;
  align-items: center;
  width: 36px;
  font-size: 14px;
  line-height: 20px;
  margin: 0 -2px;
`;

const ClockBlock = styled.div`
  margin-left: auto;
  margin-right: 24px;
  display: flex;
  flex-direction: column;
  align-items: flex-end;
  font-size: 14.5px;
  line-height: 20px;
  white-space: nowrap;
`;

const Dialog = styled.section`
  position: absolute;
  left: 9px;
  top: 0;
  width: 942px;
  height: 583px;
  display: flex;
  flex-direction: column;
  border-radius: 8px;
  overflow: hidden;
  background: #fff;
  font-family: ${UI_FONT};
  font-size: 14px;
  color: #1a1a1a;
  box-shadow: 0 14px 48px rgba(0, 0, 0, 0.42), 0 1px 3px rgba(0, 0, 0, 0.4);
`;

const DialogTitleBar = styled.div`
  height: 38px;
  flex: none;
  background: #eef2f9;
  display: flex;
  align-items: center;
  padding: 0 12px 0 9px;
`;

const DialogTitle = styled.div`
  margin-left: 6px;
  font-size: 14px;
`;

const DialogClose = styled.div`
  margin-left: auto;
  display: flex;
`;

const NavBar = styled.div`
  height: 65px;
  flex: none;
  background: #fff;
  display: flex;
  align-items: center;
  padding: 0 12px 2px 5px;
`;

const NavArrows = styled.div`
  width: 167px;
  display: grid;
  grid-template-columns: 44px 41px 37px 36px;
  justify-items: center;
  align-items: center;
`;

const PathBox = styled.div`
  width: 493px;
  height: 44px;
  border: 1px solid #d9d9d9;
  display: flex;
  align-items: center;
  padding: 0 15px;
`;

const DocIconSmall = styled.span`
  display: flex;
  transform: scale(0.85);
`;

const PathChevron = styled.span`
  margin: 0 10px;
  color: #555;
  font-size: 17px;
  line-height: 17px;
`;

const PathText = styled.span`
  color: #1a1a1a;
`;

const PathTools = styled.div`
  margin-left: auto;
  display: flex;
  align-items: center;
  gap: 29px;
`;

const SearchBox = styled.div`
  width: 253px;
  height: 44px;
  margin-left: 11px;
  border: 1px solid #d9d9d9;
  display: flex;
  align-items: center;
  justify-content: space-between;
  padding: 0 20px 0 9px;
  color: #6d6d6d;
`;

const MirrorIcon = styled.span`
  display: flex;
  transform: scaleX(-1);
`;

const CommandBar = styled.div`
  height: 38px;
  flex: none;
  background: #f3f5f8;
  display: flex;
  align-items: center;
  gap: 38px;
  padding: 0 18px 0 22px;
  color: #33475b;
`;

const Command = styled.div`
  display: flex;
  align-items: center;
  gap: 6px;
`;

const Caret = styled.span`
  width: 0;
  height: 0;
  border-left: 3.5px solid transparent;
  border-right: 3.5px solid transparent;
  border-top: 4px solid #333;
`;

const CommandRight = styled.div`
  margin-left: auto;
  display: flex;
  align-items: center;
  gap: 17px;
`;

const ListLines = styled.span`
  width: 14px;
  height: 11px;
  border-top: 1.5px solid #222;
  border-bottom: 1.5px solid #222;
  background: linear-gradient(#222, #222) center / 100% 1.5px no-repeat;
`;

const HelpCircle = styled.span`
  width: 20px;
  height: 20px;
  margin-left: 22px;
  border-radius: 50%;
  background: #0f78d4;
  color: #fff;
  font-size: 13px;
  line-height: 20px;
  text-align: center;
`;

const Panes = styled.div`
  height: 241px;
  flex: none;
  display: flex;
  border-top: 1px solid #eaeaea;
`;

const NavPane = styled.div`
  width: 175px;
  flex: none;
  padding: 0 4px 0 3px;
  overflow: hidden;
`;

const NavGallery = styled.div`
  height: 40px;
  margin-right: -3px;
  background: #d9d9d9;
  border-radius: 2px;
  display: flex;
  align-items: center;
  gap: 6px;
  padding-left: 40px;
`;

const NavDivider = styled.div`
  height: 1px;
  margin: 20px 4px 19px 10px;
  background: #d6d6d6;
`;

const NavPlace = styled.div`
  height: 40.3px;
  display: flex;
  align-items: center;
  padding-left: 40px;
`;

const NavIconSlot = styled.span`
  width: 25px;
  flex: none;
  display: flex;
  justify-content: center;
  padding-right: 6px;
`;

const PinSlot = styled.span`
  margin-left: auto;
  display: flex;
  transform: rotate(30deg);
`;

const PaneScroll = styled.div`
  width: 20px;
  flex: none;
  background: #f0f0f0;
  padding: 32px 7px 0;
`;

const PaneThumb = styled.div`
  height: 55px;
  background: #858585;
`;

const FileColumn = styled.div`
  width: 726px;
  margin-left: 2px;
  flex: none;
  display: flex;
  flex-direction: column;
  border-left: 1px solid #eaeaea;
`;

const columns = '342px 179px 150px 55px';

const FileHeader = styled.div`
  height: 33px;
  flex: none;
  display: grid;
  grid-template-columns: ${columns};
  color: #4c607a;
`;

const HeaderCell = styled.div`
  border-left: 1px solid #e5e5e5;
  padding: 6px 0 0 7px;
`;

const HeaderName = styled.div`
  position: relative;
  padding: 6px 0 0 39px;
`;

const SortCaret = styled.span`
  position: absolute;
  left: 184px;
  top: -3px;
  font-size: 12px;
  color: #555;
`;

const FileRows = styled.div`
  flex: 1;
  min-height: 0;
  overflow: hidden;
  padding-top: 5px;
`;

const FileRow = styled.div`
  height: 37px;
  display: grid;
  grid-template-columns: ${columns};
  align-items: center;
`;

const FileName = styled.div`
  display: flex;
  align-items: center;
  padding-left: 26px;
  gap: 6px;
`;

const FileIconSlot = styled.span`
  width: 18px;
  display: flex;
  justify-content: center;
`;

const FileMeta = styled.div`
  padding-left: ${({ $type }) => ($type ? '8px' : '7px')};
  color: #5f6b78;
`;

const FileHScroll = styled.div`
  height: 20px;
  flex: none;
  background: #f0f0f0;
  padding: 7px 0 0 21px;
  margin-left: 2px;
`;

const FileHThumb = styled.div`
  width: 625px;
  height: 6px;
  background: #858585;
`;

const FileVScroll = styled.div`
  width: 19px;
  flex: none;
  background: #f0f0f0;
  padding: 22px 6px 0;
`;

const FileVThumb = styled.div`
  height: 32px;
  background: #858585;
`;

const SaveForm = styled.div`
  height: 125px;
  flex: none;
  background: #f9f9f9;
  padding-top: 13px;
  display: flex;
  flex-direction: column;
  gap: 3px;
`;

const FormRow = styled.div`
  display: flex;
  align-items: center;
  height: 28px;
`;

const FormLabel = styled.div`
  width: 152px;
  text-align: right;
  margin-right: 5px;
`;

const FormField = styled.div`
  position: relative;
  width: 779px;
  height: 28px;
  background: #fff;
  border: 1px solid ${({ $focus }) => ($focus ? '#0067c0' : '#c4c4c4')};
  border-radius: 2px;
  padding-left: ${({ $focus }) => ($focus ? '6px' : '3px')};
  line-height: 26px;
  display: flex;
  align-items: center;
`;

const Selected = styled.span`
  background: #0078d4;
  color: #fff;
  line-height: 20px;
`;

const FieldChevron = styled.span`
  position: absolute;
  right: 3px;
  top: 6px;
  display: flex;
`;

const DialogFooter = styled.div`
  position: relative;
  flex: 1;
  background: #efefef;
  display: flex;
  align-items: flex-start;
  padding: 24px 23px 0 12px;
  gap: 18px;
`;

const HideFolders = styled.div`
  margin: 10px auto 0 0;
  display: flex;
  align-items: center;
  gap: 7px;
  color: #222;
`;

const FooterButton = styled.button`
  width: 107px;
  height: 31px;
  background: #fdfdfd;
  border: 1px solid ${({ $primary }) => ($primary ? '#0067c0' : '#d0d0d0')};
  border-radius: 3px;
  font-family: ${UI_FONT};
  font-size: 14px;
  color: #1a1a1a;
`;

const ResizeGrip = styled.span`
  position: absolute;
  right: 2px;
  bottom: 2px;
  width: 11px;
  height: 11px;
  background: radial-gradient(circle, #9a9a9a 1px, transparent 1.2px) 0 0 / 4px 4px;
`;

export default App;
